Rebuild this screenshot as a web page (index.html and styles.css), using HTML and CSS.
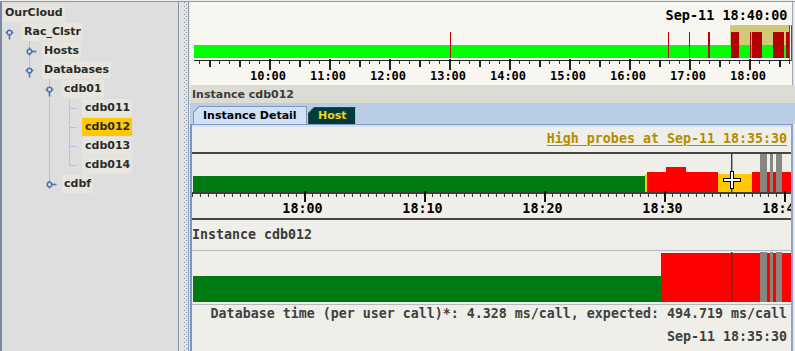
FILE: index.html
```html
<!DOCTYPE html>
<html lang="en">
<head>
    <meta charset="UTF-8">
    <title>OurCloud - Instance cdb012</title>
    <link rel="stylesheet" href="styles.css">
</head>
<body>
    <svg class="defs" width="0" height="0">
        <symbol id="h-open" viewBox="0 0 16 19">
            <path d="M1.5 9.5h8" stroke="#5373b0" stroke-width="1.4"/>
            <path d="M5.5 11.5v5" stroke="#5373b0" stroke-width="1.6"/>
            <circle cx="5.5" cy="9.5" r="2.3" fill="#dfe6f3" stroke="#5373b0" stroke-width="1.6"/>
        </symbol>
        <symbol id="h-shut" viewBox="0 0 16 19">
            <path d="M5.5 5.5v8" stroke="#5373b0" stroke-width="1.4"/>
            <path d="M7.5 9.5h5" stroke="#5373b0" stroke-width="1.6"/>
            <circle cx="5.5" cy="9.5" r="2.3" fill="#dfe6f3" stroke="#5373b0" stroke-width="1.6"/>
        </symbol>
    </svg>

    <div class="app">
        <aside class="tree-pane">
            <svg class="tree-lines" width="176" height="349" viewBox="2 2 176 349">
                <g fill="#b3c5e1">
                    <rect x="29" y="40" width="1" height="31"/>
                    <rect x="49" y="78" width="1" height="106"/>
                    <rect x="69" y="99" width="1" height="67"/>
                    <rect x="69" y="108" width="8" height="1"/>
                    <rect x="69" y="127" width="8" height="1"/>
                    <rect x="69" y="146" width="8" height="1"/>
                    <rect x="69" y="165" width="8" height="1"/>
                </g>
            </svg>
            <ul class="tree">
                <li class="node lvl0"><span class="label">OurCloud</span></li>
                <li class="node lvl1"><svg class="handle"><use href="#h-open"/></svg><span class="label">Rac_Clstr</span></li>
                <li class="node lvl2"><svg class="handle"><use href="#h-shut"/></svg><span class="label">Hosts</span></li>
                <li class="node lvl2"><svg class="handle"><use href="#h-open"/></svg><span class="label">Databases</span></li>
                <li class="node lvl3"><svg class="handle"><use href="#h-open"/></svg><span class="label">cdb01</span></li>
                <li class="node lvl4"><span class="handle"></span><span class="label leaf">cdb011</span></li>
                <li class="node lvl4"><span class="handle"></span><span class="label leaf selected">cdb012</span></li>
                <li class="node lvl4"><span class="handle"></span><span class="label leaf">cdb013</span></li>
                <li class="node lvl4"><span class="handle"></span><span class="label leaf">cdb014</span></li>
                <li class="node lvl3"><svg class="handle"><use href="#h-shut"/></svg><span class="label">cdbf</span></li>
            </ul>
        </aside>

        <div class="splitter">
            <svg width="9" height="349">
                <defs>
                    <pattern id="grip" width="9" height="4" patternUnits="userSpaceOnUse">
                        <rect x="5" y="0" width="1" height="1" fill="#8793a6"/>
                        <rect x="7" y="2" width="1" height="1" fill="#8793a6"/>
                    </pattern>
                </defs>
                <rect width="9" height="349" fill="url(#grip)"/>
            </svg>
        </div>

        <main class="main">
            <section class="overview">
                <svg class="chart" width="602" height="83" viewBox="190 2 602 83">
                    <defs>
                        <pattern id="ov-minor" width="10" height="10" patternUnits="userSpaceOnUse">
                            <rect x="9" width="1" height="10" fill="#333"/>
                        </pattern>
                    </defs>
                    <text class="ov-stamp" x="787.5" y="20" text-anchor="end">Sep-11 18:40:00</text>

                    <rect x="730" y="25" width="60" height="33" fill="#d0c97b"/>
                    <rect x="194" y="45" width="596" height="13" fill="#00ff00"/>
                    <g fill="#c40000">
                        <rect x="450" y="32" width="1" height="26"/>
                        <rect x="668" y="32" width="1" height="26"/>
                        <rect x="689" y="32" width="1" height="26"/>
                        <rect x="708" y="32" width="2" height="26"/>
                    </g>
                    <g fill="#b30000">
                        <rect x="731" y="32" width="8" height="26"/>
                        <rect x="750" y="32" width="1" height="26"/>
                        <rect x="752" y="32" width="10" height="26"/>
                        <rect x="773" y="32" width="11" height="26"/>
                        <rect x="786" y="32" width="3" height="26"/>
                    </g>
                    <rect x="789" y="25" width="1" height="36" fill="#555"/>
                    <rect x="791" y="25" width="1" height="36" fill="#555"/>

                    <rect x="194" y="60" width="597" height="1" fill="#222"/>
                    <rect x="194" y="61" width="596" height="3" fill="url(#ov-minor)"/>
                    <g fill="#222">
                        <rect x="209" y="61" width="2" height="6"/>
                        <rect x="239" y="61" width="2" height="6"/>
                        <rect x="299" y="61" width="2" height="6"/>
                        <rect x="359" y="61" width="2" height="6"/>
                        <rect x="419" y="61" width="2" height="6"/>
                        <rect x="479" y="61" width="2" height="6"/>
                        <rect x="539" y="61" width="2" height="6"/>
                        <rect x="599" y="61" width="2" height="6"/>
                        <rect x="659" y="61" width="2" height="6"/>
                        <rect x="719" y="61" width="2" height="6"/>
                        <rect x="779" y="61" width="2" height="6"/>
                        <rect x="269" y="59" width="2" height="11"/>
                        <rect x="329" y="59" width="2" height="11"/>
                        <rect x="389" y="59" width="2" height="11"/>
                        <rect x="449" y="59" width="2" height="11"/>
                        <rect x="509" y="59" width="2" height="11"/>
                        <rect x="569" y="59" width="2" height="11"/>
                        <rect x="629" y="59" width="2" height="11"/>
                        <rect x="689" y="59" width="2" height="11"/>
                        <rect x="749" y="59" width="2" height="11"/>
                    </g>
                    <g class="ov-label" text-anchor="middle">
                        <text x="268" y="80">10:00</text>
                        <text x="328" y="80">11:00</text>
                        <text x="388" y="80">12:00</text>
                        <text x="448" y="80">13:00</text>
                        <text x="508" y="80">14:00</text>
                        <text x="568" y="80">15:00</text>
                        <text x="628" y="80">16:00</text>
                        <text x="688" y="80">17:00</text>
                        <text x="748" y="80">18:00</text>
                    </g>
                </svg>
            </section>

            <div class="titlebar">Instance cdb012</div>

            <div class="tabs">
                <span class="tab tab-active">Instance Detail</span>
                <span class="tab tab-host">Host</span>
            </div>

            <section class="detail">
                <div class="probe-head">
                    <a class="probe-link">High probes at Sep-11 18:35:30</a>
                </div>

                <svg class="chart" width="599" height="68" viewBox="192 152 599 68">
                    <defs>
                        <pattern id="dt-minor" width="8" height="8" patternUnits="userSpaceOnUse">
                            <rect width="1" height="8" fill="#404040"/>
                        </pattern>
                    </defs>
                    <rect x="192" y="152" width="599" height="2" fill="#464646"/>
                    <rect x="193" y="176" width="452" height="16" fill="#007b14"/>
                    <rect x="645" y="174" width="2" height="18" fill="#ffc800"/>
                    <rect x="647" y="172" width="71" height="20" fill="#ff0000"/>
                    <rect x="666" y="167" width="20" height="5" fill="#ff0000"/>
                    <rect x="718" y="174" width="34" height="18" fill="#ffc800"/>
                    <rect x="752" y="172" width="39" height="20" fill="#ff0000"/>
                    <g fill="#878780">
                        <rect x="760" y="154" width="7" height="38"/>
                        <rect x="770" y="154" width="3" height="38"/>
                        <rect x="776" y="154" width="6" height="38"/>
                    </g>
                    <rect x="731" y="154" width="1.4" height="38" fill="#3c3c3c"/>
                    <g>
                        <rect x="723" y="178" width="18" height="4" fill="#000"/>
                        <rect x="730" y="171" width="4" height="18" fill="#000"/>
                        <rect x="724" y="179" width="16" height="2" fill="#fff"/>
                        <rect x="731" y="172" width="2" height="16" fill="#fff"/>
                    </g>

                    <rect x="192" y="192" width="599" height="2" fill="#404040"/>
                    <rect x="192" y="194" width="599" height="3" fill="url(#dt-minor)"/>
                    <g fill="#111">
                        <rect x="304" y="191" width="2" height="11"/>
                        <rect x="424" y="191" width="2" height="11"/>
                        <rect x="544" y="191" width="2" height="11"/>
                        <rect x="664" y="191" width="2" height="11"/>
                        <rect x="784" y="191" width="2" height="11"/>
                    </g>
                    <g class="dt-label" text-anchor="middle">
                        <text x="302.5" y="213">18:00</text>
                        <text x="422.5" y="213">18:10</text>
                        <text x="542.5" y="213">18:20</text>
                        <text x="662.5" y="213">18:30</text>
                        <text x="782.5" y="213">18:40</text>
                    </g>
                    <rect x="192" y="218" width="599" height="2" fill="#464646"/>
                </svg>

                <div class="inst-label">Instance cdb012</div>

                <svg class="chart inst-chart" width="599" height="53" viewBox="192 251 599 53">
                    <rect x="193" y="276" width="468" height="26" fill="#007b14"/>
                    <rect x="661" y="253" width="130" height="49" fill="#ff0000"/>
                    <g fill="#878780">
                        <rect x="760" y="252" width="7" height="50"/>
                        <rect x="770" y="252" width="3" height="50"/>
                        <rect x="776" y="252" width="6" height="50"/>
                    </g>
                    <rect x="731" y="252" width="1.4" height="50" fill="#3c3c3c"/>
                </svg>

                <div class="metric">Database time (per user call)*: 4.328 ms/call, expected: 494.719 ms/call</div>
                <div class="stamp">Sep-11 18:35:30</div>
            </section>
        </main>
    </div>
</body>
</html>
```

FILE: styles.css
```css
* {
    margin: 0;
    padding: 0;
    box-sizing: border-box;
}

body {
    width: 795px;
    height: 351px;
    overflow: hidden;
    background: #e7eaf1;
    font-family: "DejaVu Sans", sans-serif;
}

.defs {
    position: absolute;
}

.app {
    display: flex;
    height: 351px;
    border-top: 1px solid #ececec;
}

/* left tree */
.tree-pane {
    position: relative;
    width: 179px;
    flex: none;
    background: #dedede;
    border-top: 1px solid #8e9aab;
    border-left: 2px solid #7b8a9f;
    border-right: 1px solid #8494aa;
}

.tree-lines {
    position: absolute;
    left: 0;
    top: 0;
}

.tree {
    position: relative;
    list-style: none;
    padding-top: 2px;
}

.node {
    display: flex;
    align-items: flex-start;
    height: 19px;
}

.handle {
    display: block;
    width: 16px;
    height: 19px;
    flex: none;
}

.label {
    height: 18px;
    line-height: 18px;
    margin-left: 2px;
    padding: 0 2px;
    background: #e6e6de;
    color: #2b2b2b;
    font-size: 11px;
    font-weight: bold;
    white-space: nowrap;
}

.lvl0 { padding-left: 1px; }
.lvl0 .label { margin-left: 0; }
.lvl1 { padding-left: 2px; }
.lvl2 { padding-left: 22px; }
.lvl3 { padding-left: 42px; }
.lvl4 { padding-left: 62px; }

.label.leaf {
    padding: 0 2px 0 3px;
}

.label.selected {
    background: #ffc800;
}

/* splitter */
.splitter {
    width: 9px;
    flex: none;
    background: #e3e3e3;
    border-top: 1px solid #8e9aab;
}

.splitter svg {
    display: block;
}

/* right side */
.main {
    flex: 1;
    display: flex;
    flex-direction: column;
    border-top: 1px solid #8e9aab;
    border-left: 1px solid #8a9ab0;
    padding-left: 1px;
    background: #e7eaf1;
}

.chart {
    display: block;
}

.overview {
    width: 603px;
    height: 83px;
    flex: none;
    background: #f7f6f0;
    border-right: 1px solid #9da3ad;
}

.ov-stamp {
    font-family: "DejaVu Sans Mono", monospace;
    font-weight: bold;
    font-size: 13.5px;
    fill: #000;
}

.ov-label {
    font-family: "DejaVu Sans Mono", monospace;
    font-weight: bold;
    font-size: 12px;
    fill: #000;
}

.titlebar {
    height: 18px;
    flex: none;
    padding: 2px 0 0 2px;
    line-height: 16px;
    background: #dcdcd4;
    color: #3c3c3c;
    font-size: 11px;
    font-weight: bold;
}

.tabs {
    display: flex;
    align-items: flex-end;
    height: 21px;
    flex: none;
    padding-left: 3px;
    background: #b9cde5;
}

.tab {
    font-size: 11px;
    font-weight: bold;
    white-space: nowrap;
    clip-path: polygon(0 6px, 6px 0, 100% 0, 100% 100%, 0 100%);
}

.tab-active {
    width: 114px;
    height: 18px;
    padding-left: 9px;
    line-height: 17px;
    border: 1px solid #7f98ba;
    border-bottom: none;
    background: linear-gradient(135deg, #7f98ba 0 5px, #d0e0f6 5px) border-box;
    color: #000;
}

.tab-host {
    width: 48px;
    height: 17px;
    margin-left: 1px;
    padding-left: 9px;
    line-height: 16px;
    border-top: 1px solid #29464d;
    border-left: 1px solid #29464d;
    border-right: 1px solid #a9c0dc;
    background: linear-gradient(135deg, #29464d 0 5px, #003c3a 5px) border-box;
    color: #f2d21a;
}

.detail {
    flex: 1;
    display: flex;
    flex-direction: column;
    width: 603px;
    background: #efeee8;
    border-top: 1px solid #7f98ba;
    border-left: 2px solid #7a97c9;
    border-right: 2px solid #8ea4c4;
}

.probe-head {
    height: 27px;
    flex: none;
    padding-right: 4px;
    line-height: 25px;
    text-align: right;
    box-shadow: inset 0 2px #d3e1f5;
}

.probe-link {
    font: bold 13.3px "DejaVu Sans Mono", monospace;
    color: #b48c00;
    text-decoration: underline;
    text-underline-offset: 2px;
    text-decoration-thickness: 1px;
}

.dt-label {
    font-family: "DejaVu Sans Mono", monospace;
    font-weight: bold;
    font-size: 13.4px;
    fill: #000;
}

.inst-label {
    height: 31px;
    flex: none;
    line-height: 30px;
    border-bottom: 1px solid #b6b8c0;
    font: bold 13.3px/30px "DejaVu Sans Mono", monospace;
    color: #3a3a3a;
}

.inst-chart {
    box-sizing: content-box;
    border-bottom: 1px solid #b6b8c0;
}

.metric,
.stamp {
    padding-right: 4px;
    text-align: right;
    white-space: nowrap;
    color: #404040;
}

.metric {
    font: bold 13.3px/17px "DejaVu Sans Mono", monospace;
}

.stamp {
    font: bold 13.3px/29px "DejaVu Sans Mono", monospace;
}
```
